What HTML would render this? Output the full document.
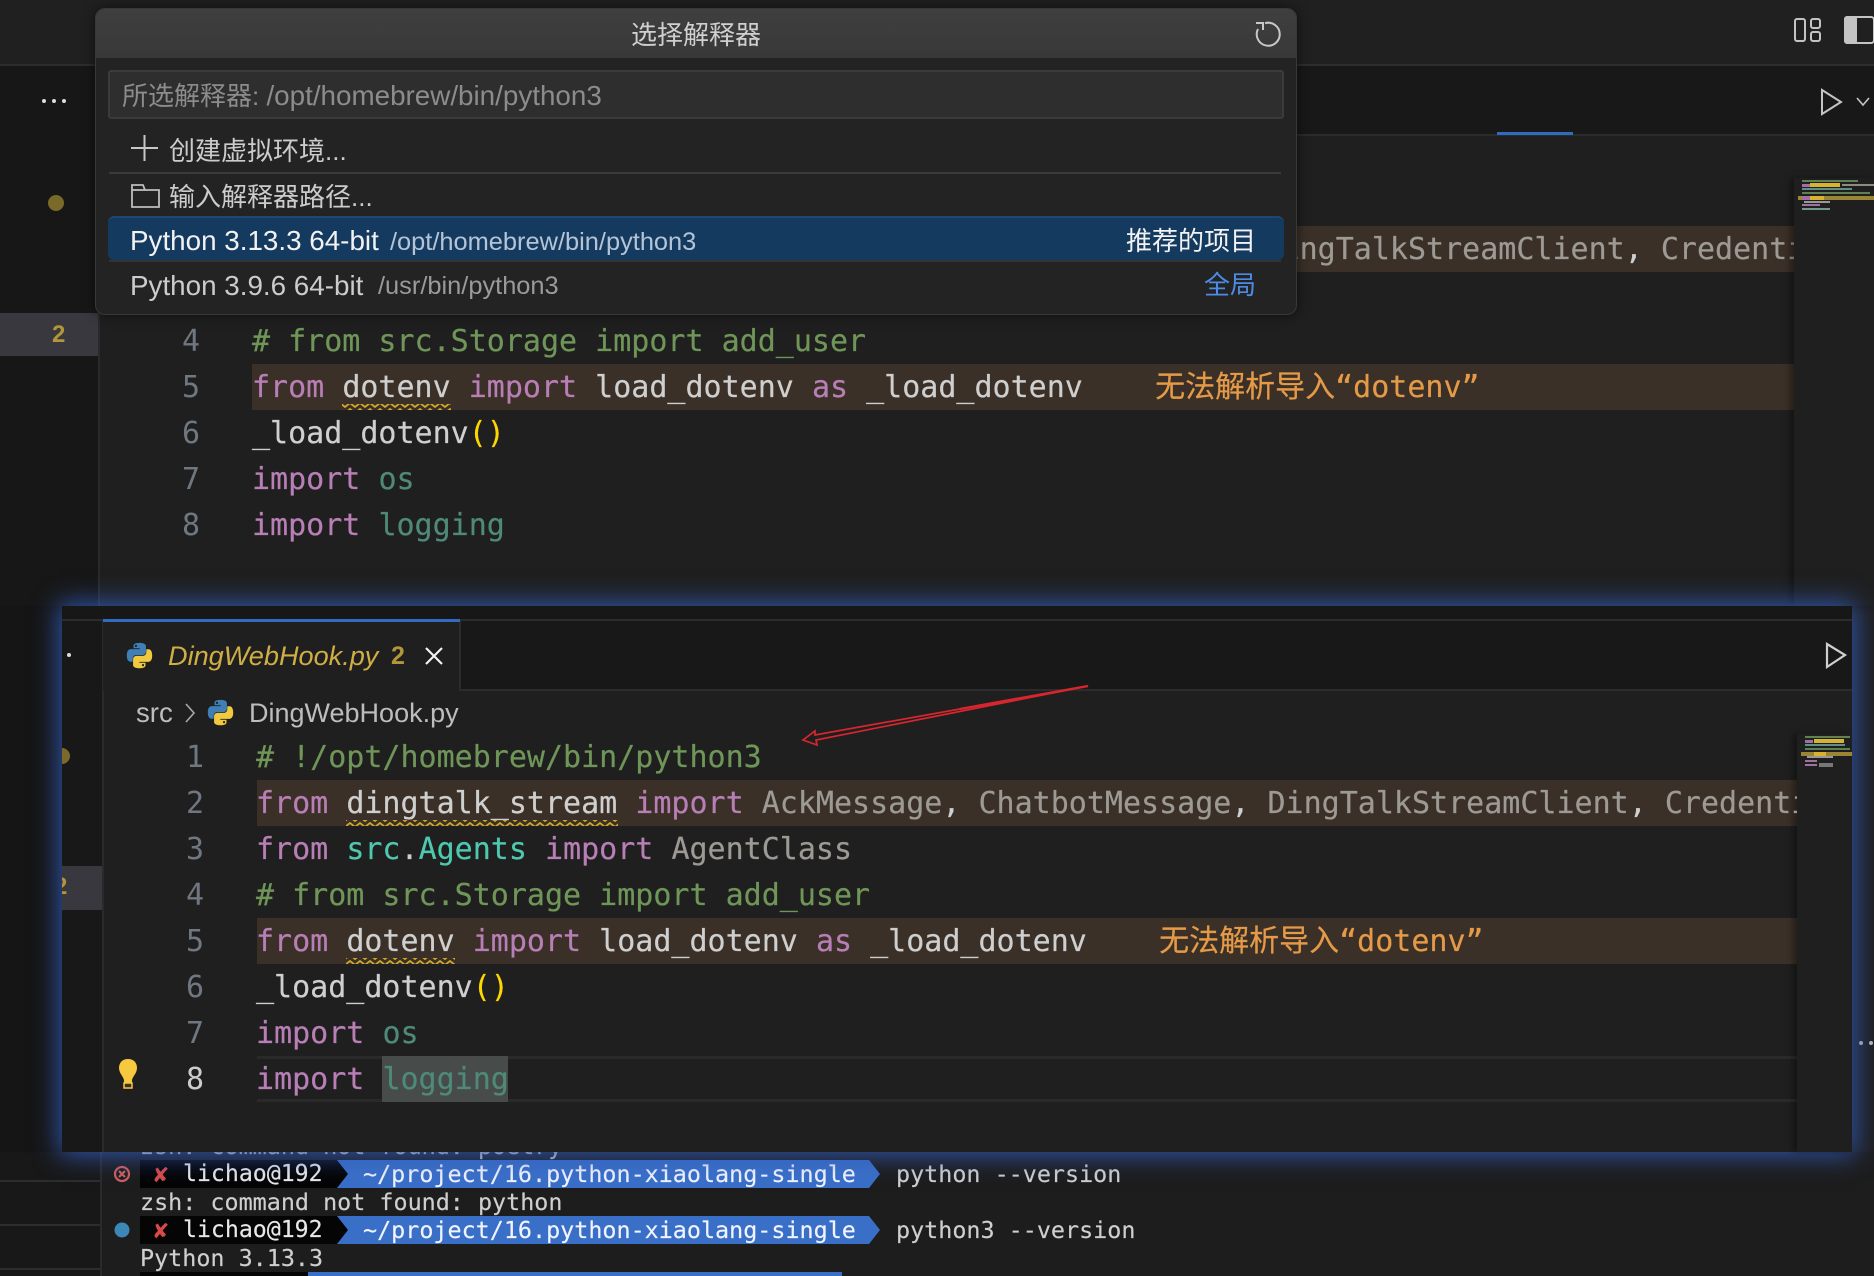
<!DOCTYPE html>
<html><head><meta charset="utf-8">
<style>
*{box-sizing:border-box}
html,body{margin:0;padding:0;background:#1f1f1f}
#r{position:relative;width:1874px;height:1276px;overflow:hidden;background:#1f1f1f;font-family:"Liberation Sans","Noto Sans CJK SC",sans-serif}
.a{position:absolute}
.c{position:absolute;font-family:"DejaVu Sans Mono","Noto Sans CJK SC",monospace;font-size:30px;line-height:46px;height:46px;white-space:pre;color:#cfcfcf;transform:translateY(1px);-webkit-text-stroke:.2px}
.n{position:absolute;font-family:"DejaVu Sans Mono",monospace;font-size:30px;line-height:46px;height:46px;width:40px;text-align:right;color:#6f7780;transform:translateY(1px)}
.k{color:#b87fb6}.g{color:#6f9658}.t{color:#4ec9b0}.d{color:#4f8a79}.w{color:#cfcfcf}.m{color:#9d9a95}.y{color:#ffd700}.o{color:#e59a48}
.u{position:absolute;font-size:26px;line-height:36px;white-space:nowrap;color:#cccccc}
.l{font-size:27.8px}
.tm{position:absolute;font-family:"DejaVu Sans Mono",monospace;font-size:23.4px;line-height:28px;height:28px;white-space:pre;color:#cfcfcf;-webkit-text-stroke:.15px}
</style></head><body><div id="r">

<!-- top window -->
<div class="a" style="left:0;top:0;width:1874px;height:64px;background:#202020"></div>
<div class="a" style="left:0;top:64px;width:1874px;height:2px;background:#2d2d2d"></div>
<div class="a" style="left:0;top:66px;width:1874px;height:68px;background:#181818"></div>
<div class="a" style="left:0;top:134px;width:1874px;height:2px;background:#2b2b2b"></div>
<div class="a" style="left:1497px;top:132px;width:76px;height:3px;background:#2f6cc0"></div>
<div class="a" style="left:0;top:66px;width:98px;height:540px;background:#171717"></div>
<div class="a" style="left:98px;top:66px;width:2px;height:540px;background:#2a2a2a"></div>
<div class="a" style="left:0;top:313px;width:98px;height:43px;background:#38383e"></div>
<div class="a" style="left:52px;top:319px;font:bold 24px/32px 'Liberation Sans';color:#b3953a">2</div>
<div class="a" style="left:48px;top:195px;width:16px;height:16px;border-radius:50%;background:#7a6a2a"></div>
<div class="a" style="left:42px;top:99px;width:4px;height:4px;border-radius:50%;background:#ddd;box-shadow:10px 0 0 #ddd,20px 0 0 #ddd"></div>
<svg class="a" style="left:0;top:0" width="1874" height="140" fill="none" stroke="#c4c4c4" stroke-width="2">
<rect x="1795" y="19" width="10" height="22" rx="2"/><rect x="1811" y="19" width="9" height="9" rx="2"/><rect x="1811" y="32" width="9" height="9" rx="2"/>
<rect x="1845" y="17" width="29" height="26" rx="3"/><rect x="1845" y="17" width="11" height="26" rx="2" fill="#c4c4c4"/>
<path d="M1822 90 L1841 102 L1822 114 Z"/><path d="M1857 98 l6 7 l6 -7" stroke-width="1.6"/>
</svg>
<div class="a" style="left:252px;top:226px;width:1542px;height:46px;background:#3a3027"></div>
<div class="a" style="left:252px;top:364px;width:1542px;height:46px;background:#3a3027"></div>
<div class="c" style="left:252px;top:226px"><span class="k">from</span> <span class="w">dingtalk_stream</span> <span class="k">import</span> <span class="m">AckMessage</span>, <span class="m">ChatbotMessage</span>, <span class="m">DingTalkStreamClient</span><span class="w">,</span> <span class="m">Credenti</span></div>
<div class="n" style="left:160px;top:318px">4</div><div class="c g" style="left:252px;top:318px"># from src.Storage import add_user</div>
<div class="n" style="left:160px;top:364px">5</div><div class="c" style="left:252px;top:364px"><span class="k">from</span> <span class="w">dotenv</span> <span class="k">import</span> load_dotenv <span class="k">as</span> _load_dotenv    <span class="o">无法解析导入“dotenv”</span></div>
<div class="n" style="left:160px;top:410px">6</div><div class="c" style="left:252px;top:410px">_load_dotenv<span class="y">()</span></div>
<div class="n" style="left:160px;top:456px">7</div><div class="c" style="left:252px;top:456px"><span class="k">import</span> <span class="d">os</span></div>
<div class="n" style="left:160px;top:502px">8</div><div class="c" style="left:252px;top:502px"><span class="k">import</span> <span class="d">logging</span></div>
<div class="a" style="left:1794px;top:178px;width:80px;height:428px;background:#1f1f1f;box-shadow:-4px 0 6px rgba(0,0,0,.35)"></div>
<svg class="a" style="left:1794px;top:178px" width="80" height="60">
<rect x="8" y="2" width="56" height="2" fill="#5f8050"/>
<rect x="8" y="6" width="8" height="3" fill="#a070a0"/><rect x="16" y="5" width="30" height="4" fill="#d8b32f"/><rect x="48" y="6" width="32" height="2" fill="#8f8a80"/>
<rect x="8" y="10" width="50" height="2" fill="#5f8f88"/>
<rect x="8" y="14" width="68" height="2" fill="#5f8050"/>
<rect x="4" y="18" width="76" height="4" fill="#9a8535"/><rect x="8" y="18" width="8" height="4" fill="#a070a0"/><rect x="16" y="18" width="14" height="4" fill="#d8b32f"/>
<rect x="10" y="23" width="26" height="2" fill="#999"/><rect x="8" y="26" width="18" height="2" fill="#a070a0"/><rect x="8" y="30" width="28" height="2" fill="#6f9a8c"/>
</svg>

<!-- left strip -->
<div class="a" style="left:0;top:606px;width:62px;height:546px;background:#151515"></div>

<!-- terminal -->
<div class="a" style="left:0;top:1152px;width:1874px;height:124px;background:#1d1d1d"></div>
<div class="a" style="left:0;top:1152px;width:100px;height:124px;background:#181818"></div>
<div class="a" style="left:100px;top:1152px;width:2px;height:124px;background:#2a2a2a"></div>
<div class="a" style="left:0;top:1180px;width:100px;height:2px;background:#2d2d2d"></div>
<div class="a" style="left:0;top:1224px;width:100px;height:2px;background:#2d2d2d"></div>
<div class="a" style="left:0;top:1268px;width:100px;height:2px;background:#2d2d2d"></div>
<div class="tm" style="left:140px;top:1132px">zsh: command not found: poetry</div>
<svg class="a" style="left:0;top:1150px" width="1000" height="126">
<path d="M140 10H337L348 24L337 38H140Z" fill="#050505"/><path d="M337 10L348 24L337 38H869L880 24L869 10Z" fill="#3a6fc8"/>
<path d="M140 66H337L348 80L337 94H140Z" fill="#050505"/><path d="M337 66L348 80L337 94H869L880 80L869 66Z" fill="#3a6fc8"/>
<path d="M140 122H308V126H140Z" fill="#050505"/><path d="M308 122H842V126H308Z" fill="#3a6fc8"/>
<g fill="none" stroke="#cf5f5f" stroke-width="2.2"><circle cx="122" cy="24" r="7"/><path d="M119 21l6 6M125 21l-6 6"/></g>
<circle cx="122" cy="80" r="7.5" fill="#3c87b8"/>
</svg>
<div class="tm" style="left:154px;top:1160px;color:#d84a4a">✘</div><div class="tm" style="left:183px;top:1160px;color:#e8e8e8;font-size:23.2px">lichao@192</div>
<div class="tm" style="left:363px;top:1160px;color:#f0f4ff">~/project/16.python-xiaolang-single</div>
<div class="tm" style="left:896px;top:1160px">python --version</div>
<div class="tm" style="left:140px;top:1188px">zsh: command not found: python</div>
<div class="tm" style="left:154px;top:1216px;color:#d84a4a">✘</div><div class="tm" style="left:183px;top:1216px;color:#e8e8e8;font-size:23.2px">lichao@192</div>
<div class="tm" style="left:363px;top:1216px;color:#f0f4ff">~/project/16.python-xiaolang-single</div>
<div class="tm" style="left:896px;top:1216px">python3 --version</div>
<div class="tm" style="left:140px;top:1244px">Python 3.13.3</div>
<div class="a" style="left:1859px;top:1041px;width:4px;height:4px;border-radius:50%;background:#bbb;box-shadow:10px 0 0 #bbb"></div>

<!-- bottom window -->
<div class="a" style="left:62px;top:606px;width:1790px;height:546px;background:#1f1f1f;box-shadow:0 0 24px 3px rgba(50,90,180,.95);overflow:hidden">
  <div class="a" style="left:0;top:0;width:1790px;height:13px;background:#171717"></div>
  <div class="a" style="left:0;top:13px;width:1790px;height:2px;background:#2c2c2c"></div>
  <div class="a" style="left:0;top:15px;width:1790px;height:68px;background:#181818"></div>
  <div class="a" style="left:0;top:83px;width:1790px;height:2px;background:#2c2c2c"></div>
  <div class="a" style="left:0;top:15px;width:40px;height:531px;background:#181818"></div>
  <div class="a" style="left:40px;top:15px;width:2px;height:531px;background:#2a2a2a"></div>
  <div class="a" style="left:0;top:260px;width:40px;height:44px;background:#38383e"></div>
  <div class="a" style="left:-8px;top:265px;font:bold 24px/32px 'Liberation Sans';color:#b3953a">2</div>
  <div class="a" style="left:-8px;top:142px;width:16px;height:16px;border-radius:50%;background:#7a6a2a"></div>
  <div class="a" style="left:5px;top:47px;width:4px;height:4px;border-radius:50%;background:#ddd"></div>
  <div class="a" style="left:41px;top:15px;width:358px;height:70px;background:#1f1f1f;border-right:2px solid #2c2c2c"></div>
  <div class="a" style="left:41px;top:13px;width:357px;height:3px;background:#2f6cc0"></div>
</div>
<svg class="a" style="left:125px;top:641px" width="29" height="29" viewBox="0 0 32 32"><path fill="#3f7fb5" d="M15.9 2C9 2 9.4 5 9.4 5V8H16.2V9H6.6S2 8.5 2 15.900s4 7 4 7H8.5V19.6s-.1-4 4-4h6.8s3.8.1 3.8-3.7V5.7S23.7 2 15.9 2zM12.1 4.2a1.2 1.2 0 1 1 0 2.4 1.2 1.2 0 0 1 0-2.4z"/><path fill="#f0c93f" transform="rotate(180 16 16)" d="M15.9 2C9 2 9.4 5 9.4 5V8H16.2V9H6.6S2 8.5 2 15.9s4 7 4 7H8.5V19.6s-.1-4 4-4h6.8s3.8.1 3.8-3.7V5.7S23.7 2 15.9 2zM12.1 4.2a1.2 1.2 0 1 1 0 2.4 1.2 1.2 0 0 1 0-2.4z"/></svg>
<div class="u" style="left:168px;top:638px;font-style:italic;color:#cfae45;font-size:27.1px">DingWebHook.py</div>
<div class="u" style="left:391px;top:638px;color:#b3953a;font-size:25px;font-weight:bold">2</div>
<svg class="a" style="left:424px;top:646px" width="20" height="20" fill="none" stroke="#f2f2f2" stroke-width="2.2"><path d="M2 2L18 18M18 2L2 18"/></svg>
<svg class="a" style="left:1824px;top:641px" width="24" height="30" fill="none" stroke="#cfcfcf" stroke-width="2.2"><path d="M3 3L21 14L3 26Z"/></svg>
<div class="u" style="left:136px;top:695px;color:#bdbdbd;font-size:27.6px">src</div>
<svg class="a" style="left:184px;top:702px" width="12" height="22" fill="none" stroke="#aaa" stroke-width="1.6"><path d="M2 2L10 11L2 20"/></svg>
<svg class="a" style="left:206px;top:698px" width="29" height="29" viewBox="0 0 32 32"><path fill="#3f7fb5" d="M15.9 2C9 2 9.4 5 9.4 5V8H16.2V9H6.6S2 8.5 2 15.9s4 7 4 7H8.5V19.6s-.1-4 4-4h6.8s3.8.1 3.8-3.7V5.7S23.7 2 15.9 2zM12.1 4.2a1.2 1.2 0 1 1 0 2.4 1.2 1.2 0 0 1 0-2.4z"/><path fill="#f0c93f" transform="rotate(180 16 16)" d="M15.9 2C9 2 9.4 5 9.4 5V8H16.2V9H6.6S2 8.5 2 15.9s4 7 4 7H8.5V19.6s-.1-4 4-4h6.8s3.8.1 3.8-3.7V5.7S23.7 2 15.9 2zM12.1 4.2a1.2 1.2 0 1 1 0 2.4 1.2 1.2 0 0 1 0-2.4z"/></svg>
<div class="u" style="left:249px;top:695px;color:#bdbdbd;font-size:27px">DingWebHook.py</div>

<div class="a" style="left:257px;top:780px;width:1540px;height:46px;background:#3a3027"></div>
<div class="a" style="left:257px;top:918px;width:1540px;height:46px;background:#3a3027"></div>
<div class="a" style="left:257px;top:1056px;width:1540px;height:46px;border-top:3px solid #2a2a2a;border-bottom:3px solid #2a2a2a"></div>
<div class="a" style="left:382px;top:1056px;width:126px;height:46px;background:#474b49"></div>
<div class="a" style="left:1797px;top:734px;width:55px;height:418px;background:#1f1f1f;box-shadow:-4px 0 6px rgba(0,0,0,.35)"></div>
<svg class="a" style="left:1797px;top:734px" width="55" height="50">
<rect x="8" y="2" width="45" height="2" fill="#5f8050"/><rect x="8" y="6" width="8" height="3" fill="#a070a0"/><rect x="17" y="5" width="30" height="4" fill="#d8b32f"/>
<rect x="8" y="10" width="40" height="2" fill="#5f8f88"/><rect x="8" y="14" width="45" height="2" fill="#5f8050"/><rect x="4" y="18" width="51" height="4" fill="#9a8535"/><rect x="17" y="18" width="12" height="4" fill="#d8b32f"/>
<rect x="10" y="22" width="26" height="2" fill="#999"/><rect x="8" y="26" width="12" height="2" fill="#a070a0"/><rect x="8" y="30" width="12" height="2" fill="#a070a0"/><rect x="22" y="29" width="14" height="4" fill="#777"/>
</svg>
<div class="n" style="left:164px;top:734px">1</div><div class="c g" style="left:256px;top:734px"># !/opt/homebrew/bin/python3</div>
<div class="n" style="left:164px;top:780px">2</div><div class="c" style="left:256px;top:780px;width:1541px;overflow:hidden"><span class="k">from</span> <span class="w">dingtalk_stream</span> <span class="k">import</span> <span class="m">AckMessage</span><span class="w">,</span> <span class="m">ChatbotMessage</span><span class="w">,</span> <span class="m">DingTalkStreamClient</span><span class="w">,</span> <span class="m">Credenti</span></div>
<div class="n" style="left:164px;top:826px">3</div><div class="c" style="left:256px;top:826px"><span class="k">from</span> <span class="t">src</span>.<span class="t">Agents</span> <span class="k">import</span> <span class="m">AgentClass</span></div>
<div class="n" style="left:164px;top:872px">4</div><div class="c g" style="left:256px;top:872px"># from src.Storage import add_user</div>
<div class="n" style="left:164px;top:918px">5</div><div class="c" style="left:256px;top:918px"><span class="k">from</span> <span class="w">dotenv</span> <span class="k">import</span> load_dotenv <span class="k">as</span> _load_dotenv    <span class="o">无法解析导入“dotenv”</span></div>
<div class="n" style="left:164px;top:964px">6</div><div class="c" style="left:256px;top:964px">_load_dotenv<span class="y">()</span></div>
<div class="n" style="left:164px;top:1010px">7</div><div class="c" style="left:256px;top:1010px"><span class="k">import</span> <span class="d">os</span></div>
<div class="n" style="left:164px;top:1056px;color:#cccccc">8</div><div class="c" style="left:256px;top:1056px"><span class="k">import</span> <span class="d">logging</span></div>

<!-- overlay svg: squiggles, arrow, bulb -->
<svg class="a" style="left:0;top:0" width="1874" height="1276" fill="none">
<defs><pattern id="sq" width="10" height="6" patternUnits="userSpaceOnUse"><path d="M-1 0.500L0 1L5 5L10 1L11 0.500" stroke="#d0a92c" stroke-width="1.8" fill="none"/></pattern></defs>
<rect x="342" y="404" width="109" height="6" fill="url(#sq)"/>
<rect x="346" y="820" width="272" height="6" fill="url(#sq)"/>
<rect x="346" y="958" width="109" height="6" fill="url(#sq)"/>
<path d="M1088 686L815 735L815 731L803 740L817 745L816 740L1088 686Z" stroke="#d8262e" stroke-width="1.7" stroke-linejoin="miter"/>
<path d="M1088 686L960 709" stroke="#d8262e" stroke-width="2.4"/>
<path d="M128 1059c-6 0-9 4-9 9 0 5 4 8 5 12v3h8v-3c1-4 5-7 5-12 0-5-3-9-9-9z" fill="#f7c93e"/><rect x="124" y="1083" width="8" height="5" fill="#3a3220" stroke="#f7c93e" stroke-width="1.5"/>
</svg>

<!-- quick pick -->
<div class="a" style="left:95px;top:8px;width:1202px;height:307px;background:#232323;border-radius:10px;border:1px solid #383838;box-shadow:0 0 12px rgba(0,0,0,.55);overflow:hidden">
  <div class="a" style="left:0;top:0;width:1200px;height:49px;background:linear-gradient(#3f3f3f,#383838)"></div>
  <div class="a" style="left:12px;top:61px;width:1176px;height:49px;background:#2e2e2e;border:2px solid #3b3b3b;border-radius:3px"></div>
  <div class="a" style="left:13px;top:163px;width:1172px;height:2px;background:#3a3a3a"></div>
  <div class="a" style="left:12px;top:207px;width:1176px;height:44px;background:#153a5f;border-radius:6px;border-top:2px solid #1f4870"></div>
  <div class="a" style="left:13px;top:251px;width:1172px;height:2px;background:#333"></div>
</div>
<div class="u" style="left:631px;top:17px;color:#cfcfcf">选择解释器</div>
<svg class="a" style="left:1252px;top:18px" width="32" height="32" fill="none" stroke="#c8c8c8" stroke-width="2"><path d="M13 5.200A11.500 11.500 0 1 1 6 11"/><path d="M4 5H11V12"/></svg>
<div class="u" style="left:122px;top:78px;color:#8c8c8c">所选解释器: <span class="l">/opt/homebrew/bin/python3</span></div>
<svg class="a" style="left:130px;top:134px" width="30" height="28" stroke="#c8c8c8" stroke-width="2"><path d="M1 14H28M14.500 1V27"/></svg>
<div class="u" style="left:169px;top:133px">创建虚拟环境...</div>
<svg class="a" style="left:131px;top:183px" width="30" height="26" fill="none" stroke="#bdbdbd" stroke-width="1.8"><path d="M1 2H12L14 7H28V24H1Z"/><path d="M1 7H14"/></svg>
<div class="u" style="left:169px;top:179px">输入解释器路径...</div>
<div class="u" style="left:130px;top:223px;color:#f2f2f2;font-size:27.8px">Python 3.13.3 64-bit</div>
<div class="u" style="left:390px;top:224px;font-size:25.4px;color:#b4c4d6">/opt/homebrew/bin/python3</div>
<div class="u" style="left:1126px;top:223px;color:#f2f2f2">推荐的项目</div>
<div class="u" style="left:130px;top:268px;color:#cccccc;font-size:27.8px">Python 3.9.6 64-bit</div>
<div class="u" style="left:378px;top:268px;font-size:25.4px;color:#9a9a9a">/usr/bin/python3</div>
<div class="u" style="left:1204px;top:267px;color:#4d8ce6">全局</div>

</div></body></html>
